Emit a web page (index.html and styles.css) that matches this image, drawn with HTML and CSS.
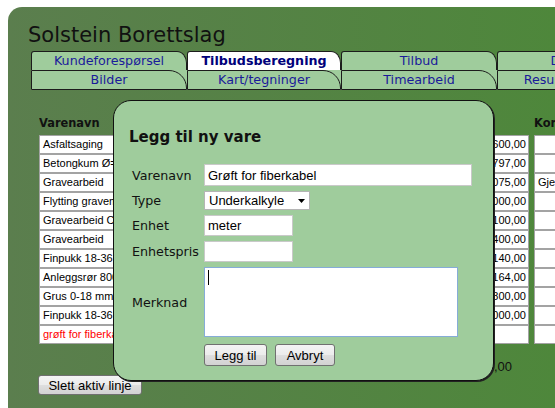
FILE: index.html
```html
<!DOCTYPE html>
<html lang="no">
<head>
<meta charset="utf-8">
<title>Solstein Borettslag</title>
<link rel="stylesheet" href="styles.css">
</head>
<body>
<div class="app">
  <h1 class="title">Solstein Borettslag</h1>
  <div class="tabs">
    <div class="tab-row top">
      <div class="tab">Kundeforespørsel</div>
      <div class="tab active">Tilbudsberegning</div>
      <div class="tab">Tilbud</div>
      <div class="tab">Dagbok</div>
    </div>
    <div class="tab-row bottom">
      <div class="tab">Bilder</div>
      <div class="tab">Kart/tegninger</div>
      <div class="tab">Timearbeid</div>
      <div class="tab">Resultatoversikt</div>
    </div>
  </div>

  <div class="sheet">
    <div class="grid">
      <div class="th">Varenavn</div><div class="th">Antall</div><div class="th">Enhet</div><div class="th">Beløp</div><div class="th">Kommentar</div>

      <div class="cell">Asfaltsaging</div><div class="cell">1</div><div class="cell">stk</div><div class="cell num">2 600,00</div><div class="cell"></div>
      <div class="cell">Betongkum Ø=1000</div><div class="cell">1</div><div class="cell">stk</div><div class="cell num">4 797,00</div><div class="cell"></div>
      <div class="cell">Gravearbeid</div><div class="cell">1</div><div class="cell">stk</div><div class="cell num">8 075,00</div><div class="cell">Gjelder kum</div>
      <div class="cell">Flytting gravemaskin</div><div class="cell">1</div><div class="cell">stk</div><div class="cell num">14 000,00</div><div class="cell"></div>
      <div class="cell">Gravearbeid C-kum</div><div class="cell">1</div><div class="cell">stk</div><div class="cell num">3 100,00</div><div class="cell"></div>
      <div class="cell">Gravearbeid</div><div class="cell">1</div><div class="cell">stk</div><div class="cell num">2 400,00</div><div class="cell"></div>
      <div class="cell">Finpukk 18-36 mm</div><div class="cell">1</div><div class="cell">tonn</div><div class="cell num">1 140,00</div><div class="cell"></div>
      <div class="cell">Anleggsrør 800 mm</div><div class="cell">1</div><div class="cell">meter</div><div class="cell num">3 164,00</div><div class="cell"></div>
      <div class="cell">Grus 0-18 mm</div><div class="cell">1</div><div class="cell">tonn</div><div class="cell num">1 800,00</div><div class="cell"></div>
      <div class="cell">Finpukk 18-36 mm</div><div class="cell">1</div><div class="cell">tonn</div><div class="cell num">6 000,00</div><div class="cell"></div>
      <div class="cell new">grøft for fiberkabel</div><div class="cell"></div><div class="cell"></div><div class="cell num"></div><div class="cell"></div>
    </div>
    <div class="total">47 076,00</div>
    <button class="btn btn-del" type="button">Slett aktiv linje</button>
  </div>

  <div class="dialog">
    <h2 class="dialog-title">Legg til ny vare</h2>
    <div class="form">
      <label class="lbl">Varenavn</label>
      <input class="input wide" type="text" value="Grøft for fiberkabel">
      <label class="lbl">Type</label>
      <div class="select"><span>Underkalkyle</span><svg width="7" height="4" viewBox="0 0 7 4"><path d="M0 0h7L3.5 4z" fill="#000"/></svg></div>
      <label class="lbl">Enhet</label>
      <input class="input short" type="text" value="meter">
      <label class="lbl">Enhetspris</label>
      <input class="input short" type="text" value="">
      <label class="lbl">Merknad</label>
      <div class="textarea" role="textbox"><span class="caret"></span></div>
      <div class="actions">
        <button class="btn btn-add" type="button">Legg til</button>
        <button class="btn btn-cancel" type="button">Avbryt</button>
      </div>
    </div>
  </div>
</div>
</body>
</html>
```

FILE: styles.css
```css
html, body {
  margin: 0;
  padding: 0;
  overflow: hidden;
  background: #fff;
}

body {
  font-family: "DejaVu Sans", Verdana, sans-serif;
}

.app {
  position: relative;
  margin: 7px 0 0 8px;
  width: 700px;
  height: 420px;
  box-sizing: border-box;
  padding: 16px 0 0 20px;
  background: linear-gradient(to right, #5b7e4e 0, #4e873b 547px, #4e873b 700px);
  border-top-left-radius: 14px;
}

.title {
  margin: 0;
  font-family: "DejaVu Sans", Verdana, sans-serif;
  font-weight: normal;
  font-size: 21px;
  line-height: 24px;
  color: #111;
}

/* Tabs */
.tabs {
  margin: 4px 0 0 3px;
}

.tab-row {
  display: grid;
  grid-template-columns: 156px 154px 156px 156px;
  width: max-content;
}

.tab {
  box-sizing: border-box;
  border: 1px solid #1c1c1c;
  text-align: center;
  font-size: 12.7px;
  line-height: 18px;
  color: #1a1a9a;
  white-space: nowrap;
  overflow: hidden;
}

.tab-row.top .tab {
  height: 19px;
  border-bottom: 0;
  border-radius: 3px 10px 0 0 / 3px 12px 0 0;
  background: #9fcc9c;
}

.tab-row.top .tab.active {
  background: #fff;
  color: #00007a;
  font-weight: bold;
}

.tab-row.bottom {
  background: #9fcc9c;
}

.tab-row.bottom .tab {
  height: 20px;
  border-radius: 0 18px 0 0 / 0 18px 0 0;
}

/* Sheet table */
.sheet {
  margin: 26px 0 0 11px;
}

.grid {
  display: grid;
  grid-template-columns: 250px 60px 60px 105px 130px;
  column-gap: 5px;
}

.th {
  font-family: "DejaVu Sans", Verdana, sans-serif;
  font-weight: bold;
  font-size: 11.4px;
  line-height: 14px;
  color: #111;
  padding-bottom: 5px;
  white-space: nowrap;
  overflow: hidden;
}

.cell {
  box-sizing: border-box;
  height: 19px;
  border: 1px solid #a3a3a3;
  background: #fff;
  font-family: "Liberation Sans", Arial, sans-serif;
  font-size: 11px;
  line-height: 17px;
  color: #000;
  padding: 0 3px;
  white-space: nowrap;
  overflow: hidden;
}

.cell.num {
  text-align: right;
  padding-right: 2px;
}

.cell.new {
  color: #f00;
}

.total {
  width: 473px;
  margin-top: 15px;
  text-align: right;
  font-family: "Liberation Sans", Arial, sans-serif;
  font-size: 13px;
  line-height: 15px;
  color: #111;
}

/* Buttons */
.btn {
  display: block;
  box-sizing: border-box;
  margin: 0;
  padding: 0;
  border: 1px solid #707070;
  border-radius: 3px;
  background: linear-gradient(#f4f4f4 0, #ececec 48%, #dedede 52%, #d2d2d2 100%);
  font-family: "Liberation Sans", Arial, sans-serif;
  font-size: 13px;
  color: #000;
  text-align: center;
}

.btn-del {
  width: 104px;
  height: 20px;
  margin: 1px 0 0 -1px;
}

/* Dialog */
.dialog {
  position: absolute;
  left: 105px;
  top: 93px;
  width: 381px;
  height: 281px;
  box-sizing: border-box;
  border: 1px solid #111;
  border-radius: 18px;
  background: #9fcc9c;
  padding: 27px 0 0 15px;
  box-shadow: 1px 1px 0 #222;
}

.dialog-title {
  margin: 0;
  font-family: "DejaVu Sans", Verdana, sans-serif;
  font-weight: bold;
  font-size: 15px;
  line-height: 18px;
  color: #111;
}

.form {
  display: grid;
  grid-template-columns: 75px auto;
  row-gap: 5px;
  align-items: center;
  justify-items: start;
  margin-top: 18px;
}

.lbl {
  font-size: 12.7px;
  line-height: 15px;
  padding-left: 3px;
  color: #111;
}

.input {
  box-sizing: border-box;
  height: 21px;
  margin: 0;
  padding: 0 3px;
  border: 1px solid #c9c9c9;
  background: #fff;
  font-family: "Liberation Sans", Arial, sans-serif;
  font-size: 13px;
  color: #000;
  outline: none;
}

.input.wide {
  width: 268px;
  height: 22px;
}

.input.short {
  width: 89px;
}

.select {
  box-sizing: border-box;
  width: 106px;
  height: 19px;
  border: 1px solid #b5b5b5;
  background: #fff;
  display: flex;
  align-items: center;
  justify-content: space-between;
  padding: 0 4px;
  font-family: "Liberation Sans", Arial, sans-serif;
  font-size: 13px;
  color: #000;
}

.textarea {
  box-sizing: border-box;
  width: 254px;
  height: 70px;
  border: 1px solid #86acd8;
  background: #fff;
  padding: 2px 3px;
}

.caret {
  display: block;
  width: 1px;
  height: 15px;
  background: #000;
}

.actions {
  grid-column: 2;
  display: flex;
  gap: 8px;
  margin-top: 2px;
}

.btn-add {
  width: 63px;
  height: 22px;
}

.btn-cancel {
  width: 60px;
  height: 22px;
}
```
